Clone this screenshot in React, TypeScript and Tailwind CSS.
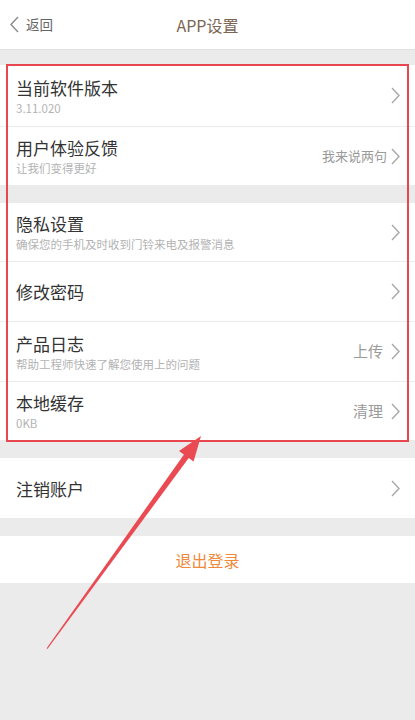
import React from "react";

const Chevron = () => (
  <svg width="9" height="17" viewBox="0 0 9 17" className="shrink-0">
    <path d="M1 1 L8 8.5 L1 16" fill="none" stroke="#a8a8a8" strokeWidth="1.4" />
  </svg>
);

type RowProps = {
  title: string;
  sub?: string;
  right?: string;
  rightCls?: string;
  h: string;
  divider?: boolean;
};

const Row = ({ title, sub, right, rightCls, h, divider }: RowProps) => {
  return (
    <div className={`flex items-center bg-white pl-4 pr-[15px] ${h} ${divider ? "border-b border-[#ececec]" : ""}`}>
      <div className="flex-1 flex flex-col justify-center">
        <span className="text-[17px] leading-[23px] text-[#333]">{title}</span>
        {sub && <span className="text-[11.5px] leading-[16px] text-[#b3b3b3] mt-[1px]">{sub}</span>}
      </div>
      {right && <span className={`${rightCls} text-[#9a9a9a]`}>{right}</span>}
      <Chevron />
    </div>
  );
};

const App = () => {
  return (
    <div
      className="relative w-full min-h-[720px] bg-[#ebebeb] overflow-hidden"
      style={{ fontFamily: '"Noto Sans CJK SC", "Noto Sans", sans-serif' }}
    >
      <div className="h-[50px] bg-white border-b border-[#e2e2e2] flex items-center relative">
        <div className="flex items-center pl-[10px] gap-[7px]">
          <svg width="9" height="17" viewBox="0 0 9 17">
            <path d="M8 1 L1 8.5 L8 16" fill="none" stroke="#8a8a8a" strokeWidth="1.4" />
          </svg>
          <span className="text-[13.5px] text-[#666]">返回</span>
        </div>
        <div className="absolute inset-0 flex items-center justify-center pointer-events-none">
          <span className="text-[16px] text-[#7a6654]">APP设置</span>
        </div>
      </div>

      <div className="mt-[15px]">
        <Row title="当前软件版本" sub="3.11.020" h="h-[62px]" divider />
        <Row title="用户体验反馈" sub="让我们变得更好" right="我来说两句" rightCls="text-[13px] mr-[4px]" h="h-[58px]" />
      </div>

      <div className="mt-[18px]">
        <Row title="隐私设置" sub="确保您的手机及时收到门铃来电及报警消息" h="h-[59px]" divider />
        <Row title="修改密码" h="h-[60px]" divider />
        <Row title="产品日志" sub="帮助工程师快速了解您使用上的问题" right="上传" rightCls="text-[15px] mr-[8px]" h="h-[60px]" divider />
        <Row title="本地缓存" sub="0KB" right="清理" rightCls="text-[15px] mr-[8px]" h="h-[58px]" />
      </div>

      <div className="mt-[18px]">
        <Row title="注销账户" h="h-[60px]" />
      </div>

      <div className="mt-[18px] h-[47px] bg-white flex items-center justify-center">
        <span className="text-[16px] text-[#ef8a3c]">退出登录</span>
      </div>

      <div className="absolute left-[6px] top-[64px] w-[403px] h-[378px] border-2 border-[#e9474f] pointer-events-none" />

      <svg className="absolute left-0 top-0 pointer-events-none" width="415" height="720" viewBox="0 0 415 720">
        <polygon
          points="46.6,648.3 47.4,648.9 190.4,455.8 185.6,452.2"
          fill="#ea4a52"
        />
        <polygon points="201,436 193.6,461.5 179,450.9" fill="#ea4a52" />
      </svg>
    </div>
  );
};

export default App;
